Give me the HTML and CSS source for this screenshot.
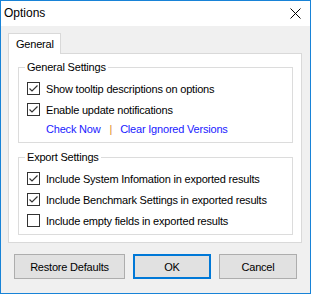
FILE: index.html
```html
<!DOCTYPE html>
<html lang="en">
<head>
    <meta charset="UTF-8">
    <title>Options</title>
    <link rel="stylesheet" href="styles.css">
</head>
<body>

<div class="window">
    <div class="titlebar">
        <span class="title">Options</span>
        <svg class="close" width="11" height="11" viewBox="0 0 11 11">
            <path d="M0.5 0.5 L10.5 10.5 M10.5 0.5 L0.5 10.5" stroke="#000" stroke-width="1" fill="none"/>
        </svg>
    </div>

    <div class="content">
        <div class="tabs">
            <div class="tab active">General</div>
        </div>

        <div class="panel">
            <fieldset class="group">
                <legend>General Settings</legend>
                <label class="option">
                    <span class="box"><svg width="11" height="11" viewBox="0 0 11 11"><path d="M1.5 5.5 L4 8 L9.5 2.5" stroke="#333" stroke-width="1.2" fill="none"/></svg></span>
                    Show tooltip descriptions on options
                </label>
                <label class="option">
                    <span class="box"><svg width="11" height="11" viewBox="0 0 11 11"><path d="M1.5 5.5 L4 8 L9.5 2.5" stroke="#333" stroke-width="1.2" fill="none"/></svg></span>
                    Enable update notifications
                </label>
                <div class="links">
                    <a href="#">Check Now</a>
                    <span class="sep">|</span>
                    <a href="#">Clear Ignored Versions</a>
                </div>
            </fieldset>

            <fieldset class="group export">
                <legend>Export Settings</legend>
                <label class="option">
                    <span class="box"><svg width="11" height="11" viewBox="0 0 11 11"><path d="M1.5 5.5 L4 8 L9.5 2.5" stroke="#333" stroke-width="1.2" fill="none"/></svg></span>
                    Include System Infomation in exported results
                </label>
                <label class="option">
                    <span class="box"><svg width="11" height="11" viewBox="0 0 11 11"><path d="M1.5 5.5 L4 8 L9.5 2.5" stroke="#333" stroke-width="1.2" fill="none"/></svg></span>
                    Include Benchmark Settings in exported results
                </label>
                <label class="option">
                    <span class="box"></span>
                    Include empty fields in exported results
                </label>
            </fieldset>
        </div>

        <div class="buttons">
            <button class="btn wide">Restore Defaults</button>
            <button class="btn default">OK</button>
            <button class="btn">Cancel</button>
        </div>
    </div>
</div>

</body>
</html>
```

FILE: styles.css
```css
body {
    margin: 0;
    font-family: "Liberation Sans", Arial, sans-serif;
    font-size: 11px;
    letter-spacing: -0.2px;
    color: #000;
}
.window {
    width: 311px;
    height: 294px;
    box-sizing: border-box;
    border: 1px solid #1883d7;
    background-color: #f0f0f0;
}
.titlebar {
    height: 25px;
    background-color: #fff;
    display: flex;
    align-items: center;
    justify-content: space-between;
    padding: 0 9px 0 3px;
}
.title {
    font-size: 12px;
    letter-spacing: 0;
    padding-bottom: 2px;
}
.close {
    margin-bottom: 1px;
}
.content {
    padding: 7px 8px 0 7px;
}
.tabs {
    display: flex;
    height: 20px;
}
.tab {
    box-sizing: border-box;
    width: 53px;
    height: 21px;
    padding: 4px 0 0 7px;
    background-color: #fff;
    border: 1px solid #d9d9d9;
    border-bottom: none;
    position: relative;
    z-index: 1;
}
.panel {
    background-color: #fff;
    border: 1px solid #d9d9d9;
    padding: 6px 8px 7px 9px;
}
.group {
    margin: 0;
    padding: 3px 0 3px 8px;
    border: 1px solid #dcdcdc;
    min-inline-size: 0;
}
.group legend {
    padding: 0 2px;
    margin-left: -2px;
    line-height: 15px;
}
.export {
    margin-top: 7px;
}
.option {
    display: flex;
    align-items: center;
    height: 21px;
}
.box {
    box-sizing: border-box;
    width: 13px;
    height: 13px;
    border: 1px solid #333;
    background-color: #fff;
    margin-right: 6px;
    display: flex;
}
.links {
    display: flex;
    align-items: center;
    height: 17px;
    padding: 0 0 2px 19px;
}
.links a {
    color: #1a1aff;
    text-decoration: none;
}
.sep {
    color: #e08a2c;
    margin: 0 8px 0 9px;
}
.buttons {
    display: flex;
    gap: 8px;
    margin-top: 11px;
    padding-left: 6px;
}
.btn {
    box-sizing: border-box;
    width: 78px;
    height: 25px;
    background-color: #e1e1e1;
    border: 1px solid #adadad;
    font-family: inherit;
    font-size: inherit;
    letter-spacing: inherit;
    color: #000;
    padding: 0;
}
.btn.wide {
    width: 111px;
}
.btn.default {
    border: 2px solid #0078d7;
}
```
